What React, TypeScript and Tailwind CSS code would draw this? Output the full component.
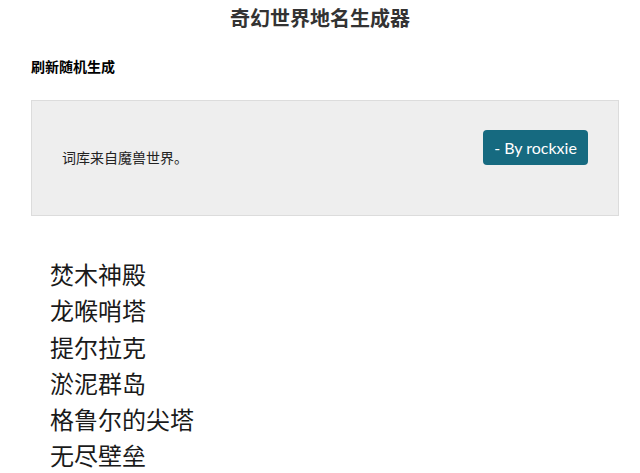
const NAMES = ['焚木神殿', '龙喉哨塔', '提尔拉克', '淤泥群岛', '格鲁尔的尖塔', '无尽壁垒'];

const CJK = "font-['Noto_Sans_CJK_SC','Microsoft_YaHei',sans-serif]";

export default function App() {
  return (
    <div className={`min-h-[473px] bg-white ${CJK}`}>
      <h1 className="pt-[3px] text-center text-[20px] leading-[30px] font-bold text-[#333]">
        奇幻世界地名生成器
      </h1>

      <div className="pl-[31px] pr-[21px] pt-[23px]">
        <h2 className="text-[14px] leading-[20px] font-bold text-black">刷新随机生成</h2>

        <div className="mt-[24px] flex h-[116px] items-start justify-between border border-[#dcdcdc] bg-[#eeeeee] pl-[30px] pr-[30px]">
          <p className="mt-[45px] text-[14px] leading-[22px] text-[#222]">词库来自魔兽世界。</p>
          <button className="mt-[29px] h-[35px] w-[105px] rounded-[4px] bg-[#166a80] font-['Lato','Open_Sans',sans-serif] text-[16px] text-white">
            - By rockxie
          </button>
        </div>
      </div>

      <ul className="mt-[40px] pl-[50px]">
        {NAMES.map(name => (
          <li key={name} className="text-[24px] leading-[36.3px] text-[#1a1a1a]">
            {name}
          </li>
        ))}
      </ul>
    </div>
  );
}
